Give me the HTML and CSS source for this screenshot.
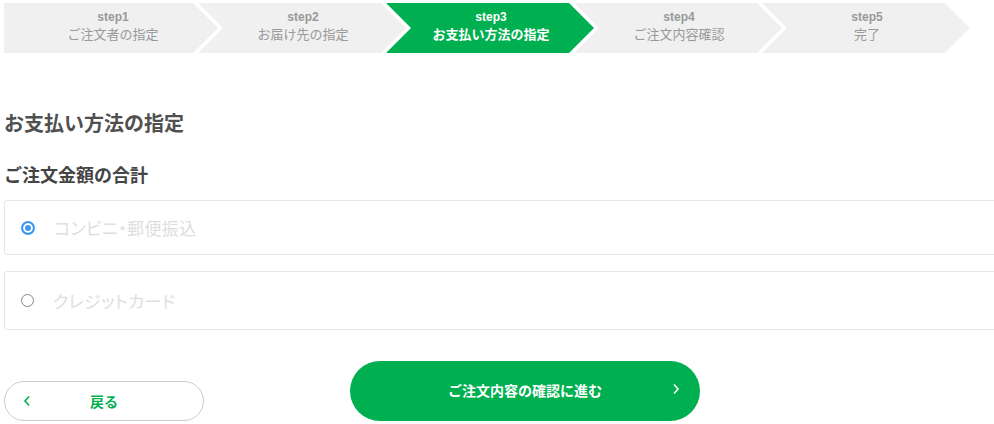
FILE: index.html
```html
<!DOCTYPE html>
<html lang="ja">
<head>
<meta charset="utf-8">
<title>お支払い方法の指定</title>
<link rel="stylesheet" href="styles.css">
</head>
<body>
<div class="page">
  <ol class="steps">
    <li class="step step--first"><span class="step__num">step1</span><span class="step__label">ご注文者の指定</span></li>
    <li class="step"><span class="step__num">step2</span><span class="step__label">お届け先の指定</span></li>
    <li class="step step--current"><span class="step__num">step3</span><span class="step__label">お支払い方法の指定</span></li>
    <li class="step"><span class="step__num">step4</span><span class="step__label">ご注文内容確認</span></li>
    <li class="step"><span class="step__num">step5</span><span class="step__label">完了</span></li>
  </ol>

  <h1 class="title">お支払い方法の指定</h1>
  <h2 class="subtitle">ご注文金額の合計</h2>

  <div class="options">
    <label class="option option--first">
      <span class="radio radio--on"></span>
      <span class="option__text">コンビニ・郵便振込</span>
    </label>
    <label class="option option--second">
      <span class="radio"></span>
      <span class="option__text">クレジットカード</span>
    </label>
  </div>

  <div class="actions">
    <div class="actions__left">
      <button class="btn-back" type="button">
        <svg class="btn-back__icon" width="8" height="12" viewBox="0 0 8 12"><polyline points="6,1.5 2,6 6,10.5" fill="none" stroke="#00b050" stroke-width="1.6"/></svg>
        戻る
      </button>
    </div>
    <button class="btn-next" type="button">
      ご注文内容の確認に進む
      <svg class="btn-next__icon" width="8" height="12" viewBox="0 0 8 12"><polyline points="2,1.5 6,6 2,10.5" fill="none" stroke="#ffffff" stroke-width="1.6"/></svg>
    </button>
    <div></div>
  </div>
</div>
</body>
</html>
```

FILE: styles.css
```css
html, body {
  margin: 0;
  padding: 0;
  background: #fff;
  overflow: hidden;
}
body {
  font-family: "Noto Sans CJK JP", "Noto Sans", sans-serif;
  color: #444;
}
.page {
  width: 1042px;
  padding: 3px 0 0 4px;
}

/* steps */
.steps {
  list-style: none;
  margin: 0;
  padding: 0;
  display: flex;
  height: 50px;
}
.step {
  flex: none;
  width: 214px;
  height: 50px;
  margin-right: -26px;
  background: #f0f0f0;
  color: #999;
  display: flex;
  flex-direction: column;
  align-items: center;
  justify-content: center;
  padding: 0 0 3px 8px;
  box-sizing: border-box;
  clip-path: polygon(6px 0, 189px 0, 214px 25px, 189px 50px, 6px 50px, 31px 25px);
}
.step--first {
  clip-path: polygon(0 0, 189px 0, 214px 25px, 189px 50px, 0 50px);
  padding-left: 4px;
}
.step--current {
  background: #00b050;
  color: #fff;
}
.step__num {
  display: block;
  font-family: "Liberation Sans", Arial, sans-serif;
  font-weight: bold;
  font-size: 12px;
  line-height: 14px;
  height: 14px;
}
.step__label {
  display: block;
  font-size: 13px;
  line-height: 19px;
  height: 19px;
}
.step--current .step__label {
  font-weight: bold;
}

/* headings */
.title {
  margin: 56px 0 0;
  font-size: 20px;
  line-height: 28px;
  font-weight: bold;
  color: #505050;
}
.subtitle {
  margin: 24px 0 0;
  font-size: 18px;
  line-height: 26px;
  font-weight: bold;
  color: #444;
}

/* options */
.options {
  margin-top: 13px;
  display: flex;
  flex-direction: column;
  gap: 16px;
}
.option {
  display: flex;
  align-items: center;
  gap: 19px;
  box-sizing: border-box;
  height: 55px;
  padding-left: 16px;
  border: 1px solid #e6e6e6;
  border-radius: 3px;
}
.option--second {
  height: 59px;
}
.radio {
  flex: none;
  width: 13px;
  height: 13px;
  box-sizing: border-box;
  border-radius: 50%;
  border: 1px solid #888;
  background: #fff;
}
.radio--on {
  width: 14px;
  height: 14px;
  border: 2px solid #3d99f5;
  background: #3d99f5;
  box-shadow: inset 0 0 0 2px #fff;
}
.option__text {
  font-size: 17px;
  color: #dedede;
  font-feature-settings: "palt";
  letter-spacing: 0.4px;
}

/* actions */
.actions {
  margin-top: 31px;
  display: grid;
  grid-template-columns: 1fr auto 1fr;
  align-items: end;
}
.btn-back {
  position: relative;
  width: 200px;
  height: 40px;
  border: 1px solid #cccccc;
  border-radius: 20px;
  background: #fff;
  color: #00b050;
  font-family: inherit;
  font-size: 14px;
  font-weight: bold;
  padding: 0;
}
.btn-back__icon {
  position: absolute;
  left: 18px;
  top: 13px;
}
.btn-next {
  position: relative;
  width: 350px;
  height: 60px;
  border: none;
  border-radius: 30px;
  background: #00b050;
  color: #fff;
  font-family: inherit;
  font-size: 14px;
  font-weight: bold;
  padding: 0 0 3px;
}
.btn-next__icon {
  position: absolute;
  right: 20px;
  top: 22px;
}
```
